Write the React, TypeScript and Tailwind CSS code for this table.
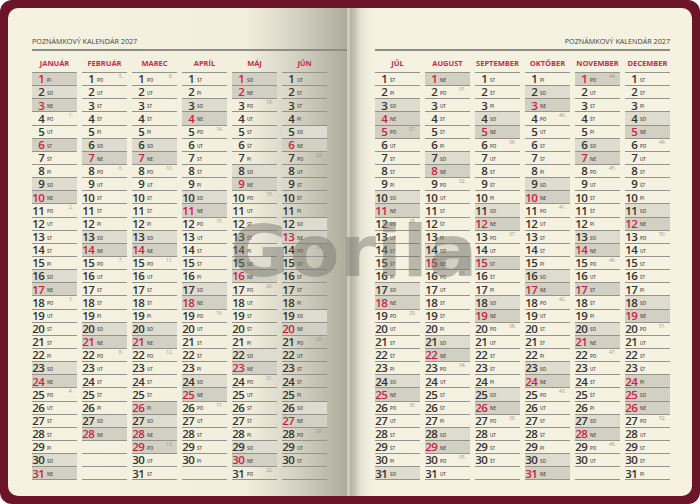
import React from "react";

const YEAR = 2027;
const DAY_NAMES = ["NE", "PO", "UT", "ST", "ŠT", "PI", "SO"];
const HOLIDAYS = new Set([
  "1-1", "1-6", "3-26", "3-29", "5-1", "7-5", "8-29",
  "9-15", "11-1", "11-17", "12-24", "12-25", "12-26",
]);

const LEFT_MONTHS = ["JANUÁR", "FEBRUÁR", "MAREC", "APRÍL", "MÁJ", "JÚN"];
const RIGHT_MONTHS = ["JÚL", "AUGUST", "SEPTEMBER", "OKTÓBER", "NOVEMBER", "DECEMBER"];

const font = { fontFamily: '"Open Sans", "Liberation Sans", sans-serif' };

const dayOfYear = (m: number, d: number) => {
  const start = Date.UTC(YEAR, 0, 1);
  return Math.round((Date.UTC(YEAR, m, d) - start) / 86400000) + 1;
};

const DayRow: React.FC<{ month: number; day: number }> = ({ month, day }) => {
  const dim = new Date(YEAR, month + 1, 0).getDate();
  if (day > dim) {
    return <div className="h-[13.15px] border-b-[1.5px] border-[#95938a]" />;
  }
  const wd = new Date(YEAR, month, day).getDay();
  const holiday = HOLIDAYS.has(`${month + 1}-${day}`);
  const red = wd === 0 || holiday;
  const bg = red ? "bg-[#d2d0c2]" : wd === 6 ? "bg-[#dedccf]" : "";
  const week = wd === 1 ? Math.floor((dayOfYear(month, day) - 4) / 7) + 1 : null;

  return (
    <div
      className={`relative flex items-center h-[13.15px] border-b-[1.5px] border-[#95938a] ${bg}`}
    >
      <span
        className={`w-[12.5px] text-right text-[11.5px] font-semibold leading-none tracking-[-0.4px] ${
          red ? "text-[#cc1d45]" : "text-[#333330]"
        }`}
      >
        {day}
      </span>
      <span className="ml-[2.5px] mt-[2px] text-[4.5px] font-semibold leading-none text-[#4a4a46]">
        {DAY_NAMES[wd]}
      </span>
      {week !== null && (
        <span className="absolute right-[4px] top-[1px] text-[5px] leading-none text-[#9a988e]">
          {week}.
        </span>
      )}
    </div>
  );
};

const MonthColumn: React.FC<{ name: string; month: number }> = ({ name, month }) => (
  <div className="w-[45px] flex flex-col">
    <div className="h-[10px] leading-[10px] text-center text-[7.5px] font-bold text-[#c92a4c]">
      {name}
    </div>
    <div className="mt-[4px] border-t-[1.5px] border-[#95938a]">
      {Array.from({ length: 31 }, (_, i) => (
        <DayRow key={i} month={month} day={i + 1} />
      ))}
    </div>
  </div>
);

const Page: React.FC<{ months: string[]; offset: number; right?: boolean }> = ({
  months,
  offset,
  right,
}) => (
  <div className="flex flex-col pt-[28px]">
    <div
      className={`h-[10px] leading-[10px] text-[7.2px] text-[#44433f] ${right ? "text-right" : ""}`}
    >
      POZNÁMKOVÝ KALENDÁR 2027
    </div>
    <div className="mt-[3px] h-[2px] bg-[#8f8d84]" />
    <div className="mt-[7px] flex gap-[5px]">
      {months.map((m, i) => (
        <MonthColumn key={m} name={m} month={offset + i} />
      ))}
    </div>
  </div>
);

export default function App() {
  return (
    <div className="w-[700px] h-[504px] bg-white" style={font}>
      <div className="relative h-full rounded-[12px] bg-[#6c1428] p-[8px] flex overflow-hidden">
        <div className="w-[339px] h-full rounded-l-[10px] pl-[24px] bg-[linear-gradient(to_right,#f5f2e2_0%,#f2efdf_70%,#d6d4c5_84%,#c2c0b1_92%,#aeac9c_100%)]">
          <Page months={LEFT_MONTHS} offset={0} />
        </div>
        <div className="w-[3px] h-full bg-[#cdcbbc]" />
        <div className="flex-1 h-full rounded-r-[10px] pl-[25px] pr-[22px] bg-[linear-gradient(to_right,#b3b1a1_0px,#c6c4b4_5px,#e6e4d4_11px,#f4f1e1_22px,#f5f2e2_100%)]">
          <Page months={RIGHT_MONTHS} offset={6} right />
        </div>
        <div
          className="pointer-events-none absolute left-[230px] top-[215px] text-[72px] font-bold leading-none tracking-[1px] text-[#707068]/45"
          style={{ fontFamily: "'DejaVu Sans', Lato, sans-serif" }}
        >
          Gorila
        </div>
      </div>
    </div>
  );
}
